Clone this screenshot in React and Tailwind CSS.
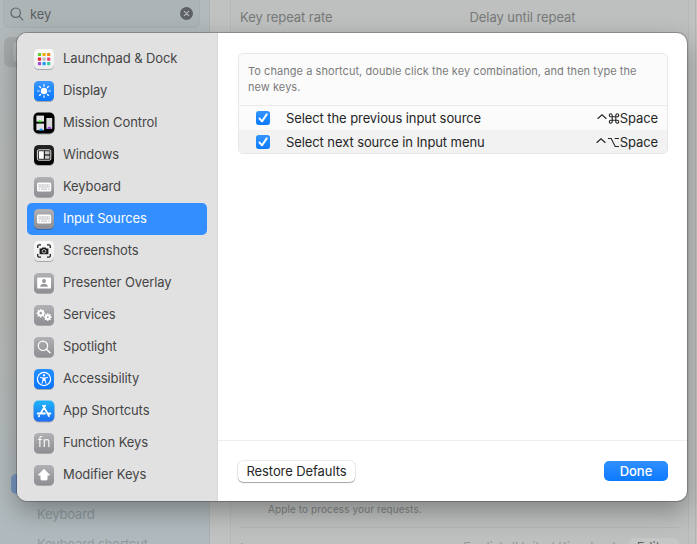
import React from "react";

function Tile({ id, from, to, children }) {
  return (
    <svg
      width="22"
      height="23"
      viewBox="-1 -1 22 23"
      className="-ml-px shrink-0 drop-shadow-[0_1px_0.5px_rgba(0,0,0,0.25)]"
    >
      <defs>
        <linearGradient id={id} x1="0" y1="0" x2="0" y2="1">
          <stop offset="0" stopColor={from} />
          <stop offset="1" stopColor={to} />
        </linearGradient>
      </defs>
      <rect width="20" height="20" rx="4.6" fill={`url(#${id})`} />
      {children}
    </svg>
  );
}

const dots = [
  ["#5fd12f", "#f5a800", "#f58a12"],
  ["#e8202b", "#b9bcc2", "#e8407e"],
  ["#a34ad0", "#1d9bf0", "#35cf9c"],
];

const Launchpad = () => (
  <Tile id="launch" from="#fbfbfb" to="#ededed">
    {dots.flatMap((row, r) =>
      row.map((c, i) => (
        <rect key={`${r}${i}`} x={3.9 + i * 4.6} y={3.9 + r * 4.6} width="3.2" height="3.2" rx="0.7" fill={c} />
      ))
    )}
  </Tile>
);

const Display = () => (
  <Tile id="display" from="#3a97ff" to="#0a78ff">
    <circle cx="10" cy="10" r="3.2" fill="#fff" />
    {[0, 45, 90, 135, 180, 225, 270, 315].map((a) => (
      <path key={a} d="M10 5.1V3.7" stroke="#fff" strokeWidth="1.2" strokeLinecap="round" transform={`rotate(${a} 10 10)`} />
    ))}
  </Tile>
);

const MissionControl = () => (
  <Tile id="mission" from="#000" to="#000">
    <rect x="-0.5" y="-0.5" width="21" height="21" rx="4.8" fill="#000" />
    <rect x="2.4" y="2.6" width="7.6" height="6" fill="#e4e4e4" />
    <rect x="2.4" y="10.6" width="7.6" height="6.6" fill="#e4e4e4" />
    <rect x="12.4" y="5" width="5.8" height="10.8" fill="#d8d8d8" />
    <path d="M4 9.2a2 2 0 0 1 4 0z" fill="#3be02f" />
    <path d="M5 17.6a2 2 0 0 1 4 0z" fill="#2196ff" />
    <path d="M13.4 15.8a2 2 0 0 1 4 0z" fill="#a33be8" />
  </Tile>
);

const Windows = () => (
  <Tile id="windows" from="#262626" to="#000">
    <rect x="3.4" y="4.8" width="13.4" height="10.4" rx="1.4" fill="none" stroke="#fff" strokeWidth="0.9" />
    <rect x="4.8" y="6.2" width="5" height="7.6" fill="#fff" />
    <rect x="10.9" y="6.2" width="4.6" height="3.2" fill="#c8c8c8" />
    <rect x="10.9" y="10.6" width="4.6" height="3.2" fill="#c8c8c8" />
  </Tile>
);

const Keyboard = ({ id }) => (
  <Tile id={id} from="#b1b1b5" to="#8d8d92">
    <rect x="3" y="5.4" width="14.2" height="9.2" rx="1.6" fill="#fff" />
    <path d="M4.5 8h11.2M4.5 10h11.2" stroke="#c6c6ca" strokeWidth="1.3" strokeDasharray="1.3 0.4" />
    <path d="M4.5 12.2h1.6M7 12.2h6.2M14.1 12.2h1.6" stroke="#b8b8bc" strokeWidth="1" />
  </Tile>
);

const Screenshots = () => (
  <Tile id="screens" from="#fafafa" to="#e9e9e9">
    <path
      d="M3.7 7V5.2a1.4 1.4 0 0 1 1.4-1.4H7M13 3.8h1.9a1.4 1.4 0 0 1 1.4 1.4V7M16.3 13v1.8a1.4 1.4 0 0 1-1.4 1.4H13M7 16.2H5.1a1.4 1.4 0 0 1-1.4-1.4V13"
      fill="none"
      stroke="#222"
      strokeWidth="1.3"
    />
    <path d="M5.6 7.6h2l.8-1.1h3.2l.8 1.1h2v5.7H5.6z" fill="#1c1c1c" />
    <circle cx="10" cy="10.3" r="1.8" fill="none" stroke="#ddd" strokeWidth="0.8" />
  </Tile>
);

const Presenter = () => (
  <Tile id="presenter" from="#b1b1b5" to="#8d8d92">
    <rect x="3.2" y="4.4" width="13.8" height="11.2" rx="1.2" fill="#fff" />
    <circle cx="10" cy="8.1" r="2" fill="#98989d" />
    <path d="M6.2 13.7c0-2 1.6-2.9 3.8-2.9s3.8.9 3.8 2.9z" fill="#98989d" />
  </Tile>
);

function Gear({ x, y, r }) {
  return (
    <g transform={`translate(${x} ${y})`}>
      <circle r={r} fill="none" stroke="#fff" strokeWidth="1.9" />
      {[0, 45, 90, 135, 180, 225, 270, 315].map((a) => (
        <rect key={a} x="-0.65" y={-r - 2} width="1.3" height="1.8" fill="#fff" transform={`rotate(${a})`} />
      ))}
    </g>
  );
}

const Services = () => (
  <Tile id="services" from="#b1b1b5" to="#8d8d92">
    <Gear x={6.8} y={8.2} r={2.3} />
    <Gear x={13.8} y={12.1} r={1.9} />
  </Tile>
);

const Spotlight = () => (
  <Tile id="spotlight" from="#b1b1b5" to="#8d8d92">
    <circle cx="9" cy="8.8" r="4.7" fill="none" stroke="#fff" strokeWidth="1.2" />
    <path d="M12.5 12.3l3.5 3.5" stroke="#fff" strokeWidth="1.5" strokeLinecap="round" />
  </Tile>
);

const Accessibility = () => (
  <Tile id="access" from="#2490ff" to="#0a74ff">
    <circle cx="10" cy="10" r="6.6" fill="none" stroke="#fff" strokeWidth="1.2" />
    <circle cx="10" cy="6.3" r="1.15" fill="#fff" />
    <path
      d="M6.5 8.5l2.5.6v2l-1 3.2M13.5 8.5l-2.5.6v2l1 3.2M9 9.1h2M9.1 11.2h1.8"
      stroke="#fff"
      strokeWidth="1"
      strokeLinecap="round"
      strokeLinejoin="round"
      fill="none"
    />
    <rect x="9" y="8.8" width="2" height="3" fill="#fff" />
  </Tile>
);

const AppShortcuts = () => (
  <Tile id="apps" from="#1fb4fb" to="#1c6df2">
    <rect x="-0.4" y="-0.4" width="20.8" height="20.8" rx="4.8" fill="url(#apps)" />
    <path
      d="M11.2 4.6L6.7 12.2M9.1 4.6L15 15M3.7 12.5h7.2M13.8 12.5h2.6M5.2 14.8l-.3.5"
      stroke="#fff"
      strokeWidth="1.8"
      strokeLinecap="round"
      fill="none"
    />
  </Tile>
);

const FunctionKeys = () => (
  <Tile id="fn" from="#b1b1b5" to="#8d8d92">
    <text x="10.1" y="14.3" textAnchor="middle" fontSize="13" fill="#f4f4f6" fontFamily="Inter, sans-serif">
      fn
    </text>
  </Tile>
);

const ModifierKeys = () => (
  <Tile id="modifier" from="#b1b1b5" to="#8d8d92">
    <path
      d="M10 4.2l5.6 5.9h-2.5v4.2q0 .7-.7.7H7.6q-.7 0-.7-.7v-4.2H4.4z"
      fill="#fff"
      stroke="#fff"
      strokeWidth="0.8"
      strokeLinejoin="round"
    />
  </Tile>
);

const items = [
  ["Launchpad & Dock", <Launchpad />],
  ["Display", <Display />],
  ["Mission Control", <MissionControl />],
  ["Windows", <Windows />],
  ["Keyboard", <Keyboard id="kb1" />],
  ["Input Sources", <Keyboard id="kb2" />],
  ["Screenshots", <Screenshots />],
  ["Presenter Overlay", <Presenter />],
  ["Services", <Services />],
  ["Spotlight", <Spotlight />],
  ["Accessibility", <Accessibility />],
  ["App Shortcuts", <AppShortcuts />],
  ["Function Keys", <FunctionKeys />],
  ["Modifier Keys", <ModifierKeys />],
];

function Check() {
  return (
    <svg width="14" height="14" viewBox="0 0 14 14" className="shrink-0 drop-shadow-[0_0.5px_0.5px_rgba(0,80,200,0.4)]">
      <defs>
        <linearGradient id="check" x1="0" y1="0" x2="0" y2="1">
          <stop offset="0" stopColor="#3395ff" />
          <stop offset="1" stopColor="#0a7aff" />
        </linearGradient>
      </defs>
      <rect width="14" height="14" rx="3.3" fill="url(#check)" />
      <path d="M3.4 7.4l2.6 3 4.7-7" fill="none" stroke="#fff" strokeWidth="1.9" strokeLinecap="round" strokeLinejoin="round" />
    </svg>
  );
}

const CommandGlyph = () => (
  <svg width="12" height="11" viewBox="0 0 12 11" className="mb-px" fill="none" stroke="#262626" strokeWidth="1.1">
    <path d="M4.2 3.7h3.6v3.6H4.2zM4.2 3.7V2.3a1.45 1.45 0 1 0-1.45 1.4zM7.8 3.7h1.45a1.45 1.45 0 1 0-1.45-1.4zM7.8 7.3v1.4a1.45 1.45 0 1 0 1.45-1.4zM4.2 7.3H2.75a1.45 1.45 0 1 0 1.45 1.4z" />
  </svg>
);

const OptionGlyph = () => (
  <svg width="13" height="11" viewBox="0 0 13 11" className="mb-px" fill="none" stroke="#262626" strokeWidth="1.1">
    <path d="M1 1.5h3.2l4 8h3.8M7.7 1.5H12" />
  </svg>
);

const ControlGlyph = () => (
  <svg width="11" height="11" viewBox="0 0 11 11" className="mb-px" fill="none" stroke="#262626" strokeWidth="1.2">
    <path d="M.6 5.8l4.400-4 4.400 4" />
  </svg>
);

function ShortcutRow({ label, glyph, className }) {
  return (
    <div className={"flex items-center pr-[9px] pl-[17px] text-[13px] text-[#262626] " + className}>
      <Check />
      <span className="ml-4 flex-1 pt-[2px] tracking-[-0.09px]">{label}</span>
      <span className="flex items-center pt-[2px]">
        <ControlGlyph />
        {glyph}
        <span className="tracking-[-0.1px]">Space</span>
      </span>
    </div>
  );
}

function Backdrop() {
  return (
    <div className="flex h-full">
      <div className="flex w-[210px] shrink-0 flex-col justify-between border-r border-[#acb2b3] bg-linear-to-b from-[#b3babc] via-[#b6b7b3] to-[#b0babe]">
        <div>
          <div className="ml-[3px] flex h-7 w-[197px] items-center rounded-b-md border border-t-0 border-[#a8afb1] bg-[#adb4b6] px-[6px]">
            <svg width="14" height="14" viewBox="0 0 14 14" fill="none" stroke="#5f6466" strokeWidth="1.2" strokeLinecap="round">
              <circle cx="5.7" cy="5.7" r="4.7" />
              <path d="M9.2 9.2l3.6 3.6" />
            </svg>
            <span className="ml-[6px] flex-1 pt-[2px] text-[13px] tracking-[-0.1px] text-[#5b5f61]">key</span>
            <svg width="13" height="13" viewBox="0 0 13 13">
              <circle cx="6.5" cy="6.5" r="6.5" fill="#5d6163" />
              <path d="M4.3 4.3l4.4 4.4M8.7 4.3l-4.4 4.4" stroke="#b5bbbc" strokeWidth="1.2" strokeLinecap="round" />
            </svg>
          </div>
          <div className="mt-[9px] ml-1 flex h-[30px] w-[197px] items-center rounded-md bg-[#a4a9aa] pl-[9px]">
            <div className="size-5 rounded bg-[#b3b7b8]" />
          </div>
        </div>
        <div className="h-[70px] text-[13px] tracking-[-0.15px] text-[#8e999e]">
          <div className="ml-[11px] size-5 rounded-[5px] bg-[#7897c2]" />
          <div className="mt-[10px] ml-[37px] leading-5">Keyboard</div>
          <div className="mt-[10px] ml-[37px] h-[10px] leading-5 whitespace-nowrap">Keyboard shortcut</div>
        </div>
      </div>
      <div className="flex flex-1 bg-[#bfc2c1] pl-5">
        <div className="flex w-[459px] flex-col justify-between border-x border-[#b5b8b7] bg-[#bdc0bf] px-[9px]">
          <div className="grid h-9 grid-cols-2 items-center text-[13px] tracking-[-0.07px] text-[#777978]">
            <div>Key repeat rate</div>
            <div className="ml-[10px]">Delay until repeat</div>
          </div>
          <div className="h-[43px] text-[#818382]">
            <div className="ml-7 h-[26px] text-[10px] leading-4 tracking-[0.1px]">Apple to process your requests.</div>
            <div className="flex h-[17px] items-start justify-between border-t border-[#b5b7b6] pt-[10px] text-[13px] leading-4 text-[#959796]">
              <span className="mt-[2px]">Languages</span>
              <span className="mt-px mr-[12px] ml-auto tracking-[-0.1px]">English (United Kingdom)</span>
              <span className="h-5 w-[50px] rounded-t-[5px] bg-[#c5c7c6] text-center leading-[18px] text-[#5f6160]">Edit…</span>
            </div>
          </div>
        </div>
        <div className="ml-[6px] flex-1 border-l border-[#b1b4b3]" />
      </div>
    </div>
  );
}

export default function App() {
  return (
    <div className="relative h-[544px] w-[697px] overflow-hidden font-['Inter','Liberation_Sans',sans-serif]">
      <Backdrop />
      <div className="absolute top-[33px] left-[17px] flex h-[468px] w-[670px] overflow-hidden rounded-[10px] bg-white shadow-[0_0_0_1px_rgba(0,0,0,0.22),0_10px_26px_rgba(0,0,0,0.32)]">
        <nav className="w-[201px] shrink-0 border-r border-[#d8d8d8] bg-[#e1e1e1] p-[10px]">
          {items.map(([label, icon]) => (
            <div
              key={label}
              className={
                "flex h-8 items-center rounded-[5px] pl-[7px] text-[13px] " +
                (label === "Input Sources" ? "bg-[#338fff] text-white" : "text-[#454545]")
              }
            >
              {icon}
              <span className="ml-2 tracking-[-0.1px]">{label}</span>
            </div>
          ))}
        </nav>
        <main className="flex flex-1 flex-col">
          <div className="flex-1 px-[19px] pt-5">
            <section className="ml-px overflow-hidden rounded-[5px] border border-[#e7e7e7] bg-[#fbfbfb]">
              <p className="h-[52px] border-b border-[#ebebeb] pt-[9px] pl-[9px] text-[11px] leading-4 tracking-[0.055px] text-[#7b7b7b]">
                To change a shortcut, double click the key combination, and then type the
                <br />
                new keys.
              </p>
              <ShortcutRow label="Select the previous input source" glyph={<CommandGlyph />} className="h-6" />
              <ShortcutRow label="Select next source in Input menu" glyph={<OptionGlyph />} className="h-[23px] bg-[#f2f2f2]" />
            </section>
          </div>
          <footer className="flex h-[61px] items-center justify-between border-t border-[#eeeeee] pr-[19px] pl-5">
            <button className="h-[21px] w-[117px] rounded-[5px] bg-white text-[13px] leading-5 tracking-[-0.08px] text-[#262626] shadow-[0_0_0_0.5px_rgba(0,0,0,0.15),0_1px_1px_rgba(0,0,0,0.3)]">
              Restore Defaults
            </button>
            <button className="h-5 w-16 rounded-[5px] bg-linear-to-b from-[#2f8fff] to-[#0a7aff] text-[13px] leading-5 font-medium text-white">
              Done
            </button>
          </footer>
        </main>
      </div>
    </div>
  );
}
